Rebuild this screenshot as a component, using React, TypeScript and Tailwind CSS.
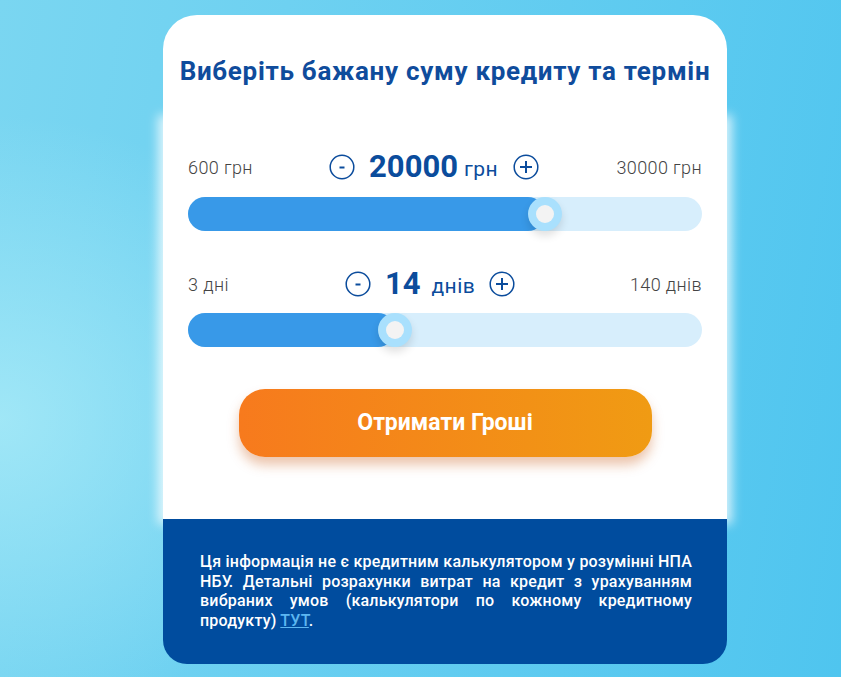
import React from 'react'

const RoundBtn = ({ plus }: { plus?: boolean }) => (
  <svg width="26" height="26" viewBox="0 0 26 26" className="shrink-0">
    <circle cx="13" cy="13" r="11.8" fill="none" stroke="#0b4c9c" strokeWidth="1.5" />
    {plus ? (
      <>
        <line x1="7" y1="13" x2="19" y2="13" stroke="#0b4c9c" strokeWidth="2" />
        <line x1="13" y1="7" x2="13" y2="19" stroke="#0b4c9c" strokeWidth="2" />
      </>
    ) : (
      <line x1="10.5" y1="13.5" x2="15.5" y2="13.5" stroke="#0b4c9c" strokeWidth="2" />
    )}
  </svg>
)

const Slider = ({ pct }: { pct: number }) => (
  <div className="relative h-[34px] w-full rounded-full bg-[#d7eefc]">
    <div className="h-full rounded-full bg-[#3899e8]" style={{ width: `${pct}%` }} />
    <div
      className="absolute top-0 flex h-[34px] w-[34px] -translate-x-1/2 items-center justify-center rounded-full bg-[#a9e0fd] shadow-[0_5px_8px_rgba(0,0,0,0.12)]"
      style={{ left: `${pct}%` }}
    >
      <div className="h-[18px] w-[18px] rounded-full bg-[#f3f3f3]" />
    </div>
  </div>
)

const App = () => {
  return (
    <div className="h-[677px] w-full overflow-hidden bg-[radial-gradient(ellipse_40%_45%_at_0%_62%,rgba(170,235,248,0.8)_0%,rgba(170,235,248,0)_100%),linear-gradient(100deg,#7ad6f1_0%,#6ed1f1_30%,#4fc5ef_100%)] pl-[163px] pt-[15px] font-['Roboto',sans-serif]">
      <div className="w-[564px]">
        <div className="rounded-t-[34px] bg-white">
          <h1 className="pt-[40px] text-center text-[26px] font-bold leading-[32px] tracking-[0.7px] text-[#0f4c9c]">
            Виберіть бажану суму кредиту та термін
          </h1>
          <div className="mt-[33px] bg-white px-[25px] pb-[62px] pt-[30px] shadow-[0_0_10px_5px_rgba(255,255,255,0.75)]">
            <div className="flex h-[34px] items-center text-[18px] font-light tracking-[0.4px] text-[#444]">
              <span className="flex-1">600 грн</span>
              <div className="mr-[22px] flex items-center text-[#0b4c9c]">
                <RoundBtn />
                <span className="ml-[14px] text-[31px] font-bold tracking-normal">20000</span>
                <span className="ml-[6px] mt-[6px] text-[21px] font-normal">грн</span>
                <span className="ml-[15px]"><RoundBtn plus /></span>
              </div>
              <span className="flex-1 text-right">30000 грн</span>
            </div>
            <div className="mt-[13px]">
              <Slider pct={69.5} />
            </div>
            <div className="mt-[36px] flex h-[34px] items-center text-[18px] font-light tracking-[0.4px] text-[#444]">
              <span className="flex-1">3 дні</span>
              <div className="mr-[30px] flex items-center text-[#0b4c9c]">
                <RoundBtn />
                <span className="ml-[14px] text-[31px] font-bold tracking-normal">14</span>
                <span className="ml-[11px] mt-[6px] text-[21px] font-normal">днів</span>
                <span className="ml-[14px]"><RoundBtn plus /></span>
              </div>
              <span className="flex-1 text-right">140 днів</span>
            </div>
            <div className="mt-[12px]">
              <Slider pct={40.3} />
            </div>
            <div className="mt-[42px] flex justify-center">
              <button className="h-[68px] w-[413px] rounded-[26px] bg-[linear-gradient(90deg,#f77a1d,#f09b13)] text-[23px] font-bold text-white shadow-[0_8px_12px_rgba(200,90,20,0.35)]">
                Отримати Гроші
              </button>
            </div>
          </div>
        </div>
        <div className="rounded-b-[24px] bg-[#004c9e] pb-[33px] pl-[37px] pr-[35px] pt-[33px]">
          <p className="text-justify text-[16px] font-medium leading-[19.7px] tracking-[0.2px] text-white">
            Ця інформація не є кредитним калькулятором у розумінні НПА НБУ. Детальні розрахунки витрат на кредит з урахуванням вибраних умов (калькулятори по кожному кредитному продукту){' '}
            <a href="#" className="text-[#5cb6f1] underline">ТУТ</a>.
          </p>
        </div>
      </div>
    </div>
  )
}

export default App
